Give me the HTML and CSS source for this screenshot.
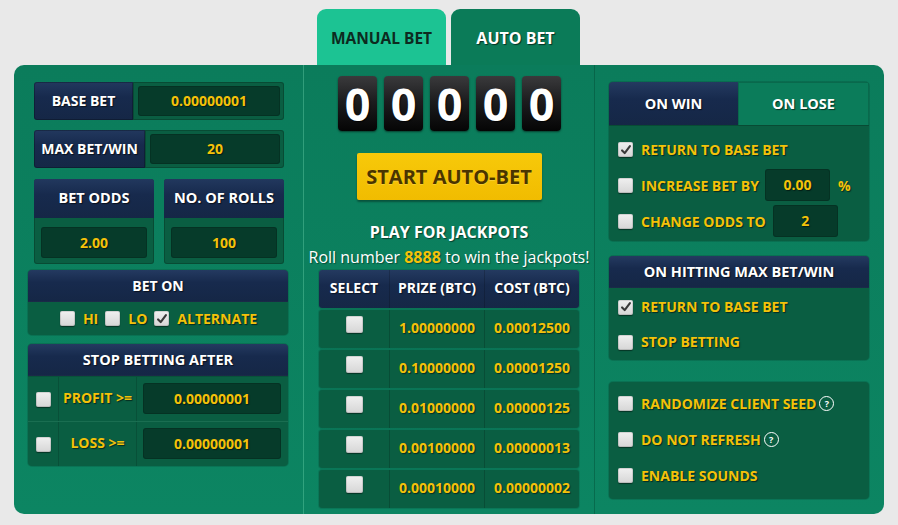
FILE: index.html
```html
<!DOCTYPE html>
<html>
<head>
<meta charset="utf-8">
<link rel="stylesheet" href="styles.css">
</head>
<body>
<div class="page">
  <div class="tabs">
    <div class="tab tab-manual">MANUAL BET</div>
    <div class="tab tab-auto">AUTO BET</div>
  </div>
  <div class="panel">
    <div class="col col-left">
      <div class="pair pair-base">
        <div class="lbl">BASE BET</div>
        <div class="field"><div class="inp">0.00000001</div></div>
      </div>
      <div class="pair pair-max">
        <div class="lbl">MAX BET/WIN</div>
        <div class="field"><div class="inp">20</div></div>
      </div>
      <div class="duo">
        <div class="stack">
          <div class="stack-head">BET ODDS</div>
          <div class="stack-body"><div class="inp">2.00</div></div>
        </div>
        <div class="stack">
          <div class="stack-head">NO. OF ROLLS</div>
          <div class="stack-body"><div class="inp">100</div></div>
        </div>
      </div>
      <div class="box box-beton">
        <div class="box-head">BET ON</div>
        <div class="beton-row">
          <span class="cb"></span><span class="ytxt">HI</span>
          <span class="cb"></span><span class="ytxt">LO</span>
          <span class="cb checked"><svg viewBox="0 0 16 16" width="16" height="16"><path d="M3.5 8.5 L6.5 11.5 L12.5 3.5" fill="none" stroke="#3a3a3a" stroke-width="2.4" stroke-linecap="round" stroke-linejoin="round"/></svg></span><span class="ytxt">ALTERNATE</span>
        </div>
      </div>
      <div class="box box-stop">
        <div class="box-head">STOP BETTING AFTER</div>
        <div class="stop-row">
          <div class="stop-cb"><span class="cb"></span></div>
          <div class="stop-lbl ytxt">PROFIT &gt;=</div>
          <div class="stop-inp"><div class="inp">0.00000001</div></div>
        </div>
        <div class="stop-row">
          <div class="stop-cb"><span class="cb"></span></div>
          <div class="stop-lbl ytxt">LOSS &gt;=</div>
          <div class="stop-inp"><div class="inp">0.00000001</div></div>
        </div>
      </div>
    </div>

    <div class="col col-mid">
      <div class="digits">
        <div class="digit">0</div>
        <div class="digit">0</div>
        <div class="digit">0</div>
        <div class="digit">0</div>
        <div class="digit">0</div>
      </div>
      <div class="start-btn">START AUTO-BET</div>
      <div class="jp-title">PLAY FOR JACKPOTS</div>
      <div class="jp-sub">Roll number <b>8888</b> to win the jackpots!</div>
      <div class="jp-table">
        <div class="jp-row jp-head">
          <div class="c1">SELECT</div><div class="c2">PRIZE (BTC)</div><div class="c3">COST (BTC)</div>
        </div>
        <div class="jp-row">
          <div class="c1"><span class="cb cb-lg"></span></div><div class="c2">1.00000000</div><div class="c3">0.00012500</div>
        </div>
        <div class="jp-row">
          <div class="c1"><span class="cb cb-lg"></span></div><div class="c2">0.10000000</div><div class="c3">0.00001250</div>
        </div>
        <div class="jp-row">
          <div class="c1"><span class="cb cb-lg"></span></div><div class="c2">0.01000000</div><div class="c3">0.00000125</div>
        </div>
        <div class="jp-row">
          <div class="c1"><span class="cb cb-lg"></span></div><div class="c2">0.00100000</div><div class="c3">0.00000013</div>
        </div>
        <div class="jp-row">
          <div class="c1"><span class="cb cb-lg"></span></div><div class="c2">0.00010000</div><div class="c3">0.00000002</div>
        </div>
      </div>
    </div>

    <div class="col col-right">
      <div class="box box-win">
        <div class="win-tabs">
          <div class="wtab wtab-on">ON WIN</div>
          <div class="wtab wtab-off">ON LOSE</div>
        </div>
        <div class="win-body">
          <div class="opt"><span class="cb checked"><svg viewBox="0 0 16 16" width="16" height="16"><path d="M3.5 8.5 L6.5 11.5 L12.5 3.5" fill="none" stroke="#3a3a3a" stroke-width="2.4" stroke-linecap="round" stroke-linejoin="round"/></svg></span><span class="ytxt">RETURN TO BASE BET</span></div>
          <div class="opt"><span class="cb"></span><span class="ytxt">INCREASE BET BY</span><span class="inp inp-sm inp-inc">0.00</span><span class="ytxt pct">%</span></div>
          <div class="opt"><span class="cb"></span><span class="ytxt">CHANGE ODDS TO</span><span class="inp inp-sm inp-odds">2</span></div>
        </div>
      </div>
      <div class="box box-max">
        <div class="box-head">ON HITTING MAX BET/WIN</div>
        <div class="max-body">
          <div class="opt opt-35"><span class="cb checked"><svg viewBox="0 0 16 16" width="16" height="16"><path d="M3.5 8.5 L6.5 11.5 L12.5 3.5" fill="none" stroke="#3a3a3a" stroke-width="2.4" stroke-linecap="round" stroke-linejoin="round"/></svg></span><span class="ytxt">RETURN TO BASE BET</span></div>
          <div class="opt opt-35"><span class="cb"></span><span class="ytxt">STOP BETTING</span></div>
        </div>
      </div>
      <div class="box box-misc">
        <div class="opt"><span class="cb"></span><span class="ytxt">RANDOMIZE CLIENT SEED</span><span class="qm">?</span></div>
        <div class="opt"><span class="cb"></span><span class="ytxt">DO NOT REFRESH</span><span class="qm">?</span></div>
        <div class="opt"><span class="cb"></span><span class="ytxt">ENABLE SOUNDS</span></div>
      </div>
    </div>
  </div>
</div>
</body>
</html>
```

FILE: styles.css
```css
* { box-sizing: border-box; }
html, body { margin: 0; padding: 0; }
body {
  background: #e9e9e9;
  font-family: "Open Sans", "Liberation Sans", sans-serif;
  font-weight: 700;
  font-size: 14px;
  color: #fff;
  width: 898px;
  height: 525px;
  overflow: hidden;
}
.page { padding: 9px 0 0 14px; }

.tabs { display: flex; gap: 5px; margin-left: 303px; height: 56px; }
.tab {
  width: 129px; height: 56px;
  border-radius: 9px 9px 0 0;
  display: flex; align-items: center; justify-content: center;
  font-size: 15.5px; padding-top: 1px;
}
.tab-manual { background: #1cc393; color: #0d2a20; }
.tab-auto { background: #0b7b58; color: #fff; text-shadow: 1px 1px 1px rgba(0,0,0,.6); font-size: 16px; }

.panel {
  width: 870px; height: 449px;
  background: #0b8060;
  background-image: linear-gradient(180deg, #0b7c5b 0%, #0c8562 100%);
  border-radius: 10px;
  display: grid;
  grid-template-columns: 289px 292px 289px;
}
.col { height: 100%; }
.col-mid { border-left: 1px solid rgba(120, 220, 180, 0.35); border-right: 1px solid rgba(0,60,40,0.35); }

.ytxt { color: #f3c20a; text-shadow: 1px 1px 1px rgba(0,0,0,.55); }
.lbl, .stack-head, .box-head, .wtab, .jp-head { text-shadow: 1px 1px 1px rgba(0,0,0,.6); }

/* left column */
.col-left { padding: 17px 15px 0 14px; display: flex; flex-direction: column; }
.pair { display: flex; height: 38px; margin: 0 4px 0 6px; }
.pair-max { margin-top: 10px; }
.lbl {
  background: linear-gradient(180deg, #22385e 0%, #172a4d 40%, #152746 100%);
  border-radius: 3px 0 0 3px;
  display: flex; align-items: center; justify-content: center;
  padding-bottom: 2px;
  box-shadow: inset 0 0 0 1px rgba(0,0,0,.25);
}
.pair-base .lbl { width: 99px; }
.pair-max .lbl { width: 111px; }
.field {
  flex: 1;
  background: #0a5e42;
  border-radius: 0 3px 3px 0;
  padding: 4px 4px 4px 5px;
  box-shadow: inset 0 0 0 1px rgba(0,0,0,.2);
}
.inp {
  background: #063b2a;
  border-radius: 3px;
  color: #f3c20a;
  text-shadow: 1px 1px 1px rgba(0,0,0,.5);
  height: 100%;
  display: flex; align-items: center; justify-content: center;
  padding-bottom: 1px;
  box-shadow: inset 0 0 0 1px rgba(0,0,0,.15);
}
.duo { display: flex; gap: 10px; margin: 11px 4px 0 6px; }
.stack { flex: 1; height: 85px; border-radius: 3px; overflow: hidden; background: #0a5e42; box-shadow: inset 0 0 0 1px rgba(0,0,0,.2); }
.stack-head {
  height: 39px;
  background: linear-gradient(180deg, #22385e 0%, #172a4d 40%, #152746 100%);
  display: flex; align-items: center; justify-content: center;
  padding-bottom: 2px;
  font-size: 14.5px;
}
.stack-body { height: 46px; padding: 9px 7px 6px 7px; }

.box {
  background: #0a5e42;
  border-radius: 4px;
  box-shadow: 0 0 0 1px rgba(0,0,0,.12);
  overflow: hidden;
}
.box-head {
  background: linear-gradient(180deg, #243a60 0%, #172a4d 40%, #152746 100%);
  display: flex; align-items: center; justify-content: center;
  padding-bottom: 1px;
  border-bottom: 1px solid rgba(0,0,0,.25);
}
.box-beton { margin-top: 6px; height: 65px; }
.box-beton .box-head { height: 32px; }
.beton-row { height: 33px; display: flex; align-items: center; justify-content: center; padding-left: 8px; font-size: 14px; }
.beton-row .cb { margin-right: 8px; }
.beton-row .ytxt { margin-right: 7px; }

.box-stop { margin-top: 9px; height: 122px; }
.box-stop .box-head { height: 32px; font-size: 14.5px; }
.stop-row { display: flex; height: 45px; border-top: 1px solid rgba(0,0,0,.12); }
.stop-row + .stop-row { border-top: 1px solid rgba(120,200,170,.15); }
.stop-cb { width: 31px; display: flex; align-items: center; justify-content: center; border-right: 1px solid rgba(0,0,0,.15); padding-left: 1px; }
.stop-lbl { width: 78px; display: flex; align-items: center; justify-content: center; border-right: 1px solid rgba(0,0,0,.15); padding-bottom: 4px; }
.stop-inp { flex: 1; padding: 6px 7px 7px 6px; }

/* checkbox */
.cb {
  display: inline-flex; align-items: center; justify-content: center;
  width: 15px; height: 15px; flex: none;
  background: linear-gradient(180deg, #f0f0f0 0%, #d6d6d6 100%);
  border-radius: 2px;
  box-shadow: 0 1px 1px rgba(0,0,0,.45), inset 0 0 0 1px rgba(0,0,0,.12);
}
.cb svg { width: 14px; height: 14px; }
.cb-lg { width: 17px; height: 17px; }

/* middle column */
.col-mid { padding-top: 11px; display: flex; flex-direction: column; align-items: center; }
.digits { display: flex; gap: 7px; margin-left: 1px; }
.digit {
  width: 39px; height: 55px;
  border-radius: 4px;
  background: linear-gradient(180deg, #3a3a3c 0%, #1d1d1f 45%, #050505 100%);
  box-shadow: 0 1px 2px rgba(0,0,0,.5);
  color: #fff;
  font-size: 45px;
  line-height: 55px;
  text-align: center;
  text-shadow: 1px 1px 1px rgba(0,0,0,.8);
}
.start-btn {
  margin-top: 22px;
  width: 185px; height: 47px;
  background: linear-gradient(180deg, #f7c90a 0%, #f1bc00 100%);
  border-radius: 2px;
  box-shadow: 0 2px 2px rgba(0,0,0,.35);
  color: #4a3500;
  font-size: 20px;
  display: flex; align-items: center; justify-content: center;
  padding-bottom: 1px;
  text-shadow: 0 1px 0 rgba(255,230,120,.4);
}
.jp-title { margin-top: 22px; font-size: 16px; line-height: 20px; text-shadow: 1px 1px 1px rgba(0,0,0,.5); }
.jp-sub { margin-top: 5px; font-size: 16px; font-weight: 400; line-height: 20px; text-shadow: 1px 1px 1px rgba(0,0,0,.4); }
.jp-sub b { color: #f3c20a; font-weight: 700; }
.jp-table { margin-top: 3px; width: 260px; display: flex; flex-direction: column; gap: 2px; }
.jp-row {
  display: grid; grid-template-columns: 70px 95px 95px;
  height: 38px;
  background: #0a5e42;
  border-radius: 3px;
  box-shadow: 0 0 0 1px rgba(0,0,0,.1);
  color: #f3c20a;
  text-shadow: 1px 1px 1px rgba(0,0,0,.5);
}
.jp-row > div { display: flex; align-items: center; justify-content: center; padding-bottom: 4px; }
.jp-row > div + div { border-left: 1px solid rgba(0,0,0,.18); }
.jp-row .c1 { align-items: flex-start; padding-top: 6px; padding-bottom: 0; }
.jp-head { background: linear-gradient(180deg, #243a60 0%, #172a4d 40%, #152746 100%); color: #fff; }
.jp-head > div { padding-bottom: 3px; }
.jp-head .c1 { align-items: center; padding-top: 0; padding-bottom: 3px; }

/* right column */
.col-right { padding: 17px 15px 0 14px; display: flex; flex-direction: column; }
.box-win { height: 159px; }
.win-tabs { display: flex; height: 43px; }
.wtab { flex: 1; display: flex; align-items: center; justify-content: center; font-size: 14.5px; padding-bottom: 1px; }
.wtab-on { background: linear-gradient(180deg, #243a60 0%, #172a4d 40%, #152746 100%); }
.wtab-off { background: #0b7c5a; border: 1px solid rgba(0,0,0,.15); border-bottom: none; }
.win-body { padding: 5px 0 0 9px; border-top: 1px solid rgba(0,0,0,.2); }
.opt { display: flex; align-items: center; height: 36px; font-size: 14px; }
.opt .cb { margin-right: 8px; margin-top: 1px; }
.opt-35 { height: 35px; }
.inp-sm { height: 32px; width: 65px; display: inline-flex; font-size: 14px; }
.inp-inc { margin-left: 6px; }
.inp-odds { margin-left: 7px; }
.pct { margin-left: 8px; }
.box-max { margin-top: 15px; height: 104px; }
.box-max .box-head { height: 32px; font-size: 14.5px; }
.max-body { padding: 1px 0 0 9px; }
.box-misc { margin-top: 22px; height: 117px; padding: 3px 0 0 9px; }
.qm {
  display: inline-flex; align-items: center; justify-content: center;
  width: 15px; height: 15px; margin-left: 3px;
  border: 1.5px solid #fff; border-radius: 50%;
  font-size: 9px; color: #fff; line-height: 1;
}
```
